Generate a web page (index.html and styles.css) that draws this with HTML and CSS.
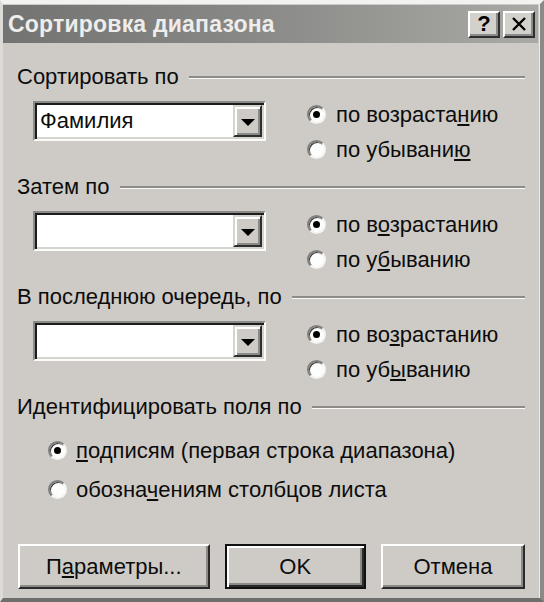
FILE: index.html
```html
<!DOCTYPE html>
<html lang="ru">
<head>
<meta charset="utf-8">
<title>Сортировка диапазона</title>
<link rel="stylesheet" href="styles.css">
</head>
<body>
<div class="window">
  <div class="titlebar">
    <span class="title">Сортировка диапазона</span>
    <div class="tb-buttons">
      <span class="tb-btn help">?</span>
      <span class="tb-btn close"><svg width="16" height="14" viewBox="0 0 16 14"><path d="M2 1 L14 13 M14 1 L2 13" stroke="#000" stroke-width="2.4" fill="none"/></svg></span>
    </div>
  </div>
  <div class="content">
    <section class="group">
      <div class="group-head"><span>Сортировать по</span><span class="etch"></span></div>
      <div class="group-row">
        <div class="combo"><span class="combo-text">Фамилия</span><span class="combo-btn"><span class="arrow"></span></span></div>
        <div class="radios">
          <div class="radio"><span class="rb checked"></span><span>по возраста<u>н</u>ию</span></div>
          <div class="radio"><span class="rb"></span><span>по убывани<u>ю</u></span></div>
        </div>
      </div>
    </section>
    <section class="group">
      <div class="group-head"><span>Затем по</span><span class="etch"></span></div>
      <div class="group-row">
        <div class="combo"><span class="combo-text"></span><span class="combo-btn"><span class="arrow"></span></span></div>
        <div class="radios">
          <div class="radio"><span class="rb checked"></span><span>по в<u>о</u>зрастанию</span></div>
          <div class="radio"><span class="rb"></span><span>по у<u>б</u>ыванию</span></div>
        </div>
      </div>
    </section>
    <section class="group">
      <div class="group-head"><span>В последнюю очередь, по</span><span class="etch"></span></div>
      <div class="group-row">
        <div class="combo"><span class="combo-text"></span><span class="combo-btn"><span class="arrow"></span></span></div>
        <div class="radios">
          <div class="radio"><span class="rb checked"></span><span>по во<u>з</u>растанию</span></div>
          <div class="radio"><span class="rb"></span><span>по уб<u>ы</u>ванию</span></div>
        </div>
      </div>
    </section>
    <section class="group last">
      <div class="group-head"><span>Идентифицировать поля по</span><span class="etch"></span></div>
      <div class="id-radios">
        <div class="radio tall"><span class="rb checked"></span><span><u>п</u>одписям (первая строка диапазона)</span></div>
        <div class="radio tall"><span class="rb"></span><span>обозна<u>ч</u>ениям столбцов листа</span></div>
      </div>
    </section>
    <div class="buttons">
      <span class="btn params">П<u>а</u>раметры...</span>
      <span class="btn ok">OK</span>
      <span class="btn cancel">Отмена</span>
    </div>
  </div>
</div>
</body>
</html>
```
FILE: styles.css
```css
* { box-sizing: border-box; }
html, body { margin: 0; padding: 0; }
body {
  width: 544px;
  height: 602px;
  overflow: hidden;
  background: #8a8a88;
  font-family: "Liberation Sans", Arial, sans-serif;
  font-size: 22px;
  color: #0c0c0c;
}
.window {
  width: 544px;
  height: 602px;
  background: #cecbc6;
  border-top: 4px solid #f2f2f0;
  border-left: 3px solid #dcdbd8;
  border-right: 4px solid #8a8a88;
  border-bottom: 4px solid #6e6e6c;
  box-shadow: inset -1px 0 0 #ecebe8;
  display: flex;
  flex-direction: column;
}
.titlebar {
  height: 38px;
  margin-top: 1px;
  margin-right: 2px;
  background: linear-gradient(to right, #737371, #888886 45%, #a9a9a5);
  display: flex;
  align-items: center;
  justify-content: space-between;
  padding: 0 3px 0 5px;
}
.title {
  color: #ededeb;
  font-weight: bold;
  font-size: 23px;
  letter-spacing: 0.2px;
}
.tb-buttons { display: flex; gap: 3px; }
.tb-btn {
  width: 32px;
  height: 27px;
  background: #d3d1cc;
  border-top: 2px solid #fff;
  border-left: 2px solid #fff;
  border-right: 2px solid #2e2e2e;
  border-bottom: 2px solid #2e2e2e;
  box-shadow: inset -2px -2px 0 #8a8a88;
  display: flex;
  align-items: center;
  justify-content: center;
  font-weight: bold;
  font-size: 22px;
  color: #000;
  padding-bottom: 1px;
}
.content {
  flex: 1;
  display: flex;
  flex-direction: column;
  padding: 23px 15px 0 14px;
}
.group { margin-bottom: 8px; }
.group-head {
  display: flex;
  align-items: center;
  height: 22px;
  gap: 10px;
  white-space: nowrap;
}
.etch {
  flex: 1;
  height: 3px;
  border-top: 2px solid #8d8c89;
  border-bottom: 1px solid #fbfbfa;
}
.group-row {
  display: flex;
  margin-top: 9px;
  height: 71px;
  padding-left: 16px;
  gap: 41px;
}
.combo {
  width: 233px;
  height: 40px;
  margin-top: 4px;
  background: #fff;
  border: 2px solid;
  border-color: #8a8a88 #fbfbfa #fbfbfa #8a8a88;
  box-shadow: inset 2px 2px 0 #1c1c1c, inset -2px -2px 0 #d6d4cf;
  display: flex;
  align-items: stretch;
  padding: 2px;
}
.combo-text {
  flex: 1;
  padding-left: 3px;
  display: flex;
  align-items: center;
}
.combo-btn {
  width: 29px;
  background: #cecbc6;
  border-top: 2px solid #d6d4cf;
  border-left: 2px solid #d6d4cf;
  border-right: 2px solid #2e2e2e;
  border-bottom: 2px solid #2e2e2e;
  box-shadow: inset 2px 2px 0 #fff, inset -2px -2px 0 #8a8a88;
  display: flex;
  align-items: center;
  justify-content: center;
}
.arrow {
  width: 0;
  height: 0;
  border-left: 7px solid transparent;
  border-right: 7px solid transparent;
  border-top: 7px solid #000;
  margin-top: 2px;
}
.radios { display: flex; flex-direction: column; }
.radio {
  height: 35px;
  display: flex;
  align-items: center;
  gap: 10px;
  white-space: nowrap;
}
.radio.tall { height: 39px; gap: 9px; }
.rb {
  position: relative;
  width: 19px;
  height: 19px;
  flex: none;
  border-radius: 50%;
  background: #fdfdfc;
  border: 2px solid;
  border-color: #7f7f7d #f4f4f2 #f4f4f2 #7f7f7d;
  box-shadow: inset 1px 1px 0 #3c3c3c;
}
.rb.checked::after {
  content: "";
  position: absolute;
  left: 4px;
  top: 4px;
  width: 7px;
  height: 7px;
  border-radius: 50%;
  background: #000;
}
.id-radios {
  margin-top: 13px;
  padding-left: 31px;
  display: flex;
  flex-direction: column;
}
.buttons {
  display: flex;
  gap: 15px;
  margin-top: 27px;
  padding-left: 1px;
}
.btn {
  height: 45px;
  background: #cecbc6;
  border-top: 2px solid #fff;
  border-left: 2px solid #fff;
  border-right: 2px solid #2a2a2a;
  border-bottom: 2px solid #2a2a2a;
  box-shadow: inset -2px -2px 0 #8a8a88;
  display: flex;
  align-items: center;
  justify-content: center;
}
.btn.params { width: 194px; }
.btn.ok {
  width: 143px;
  border: 2px solid #111;
  box-shadow: inset 2px 2px 0 #fff, inset -2px -2px 0 #2a2a2a, inset -4px -4px 0 #8a8a88;
}
.btn.cancel { width: 146px; }
```
